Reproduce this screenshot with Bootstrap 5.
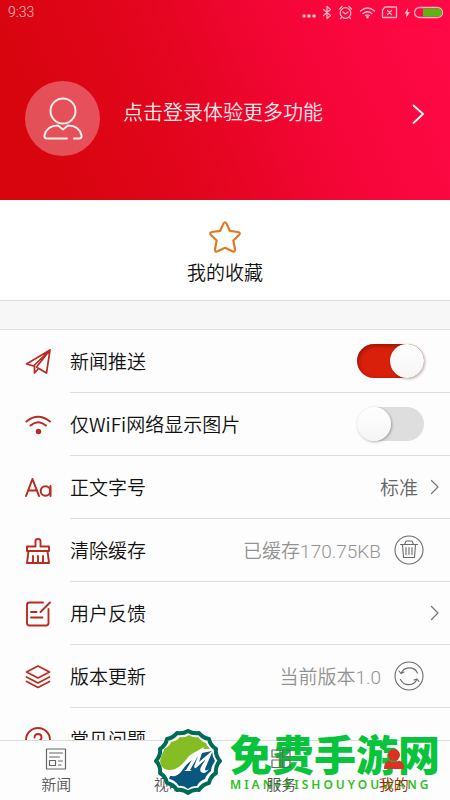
<!DOCTYPE html>
<html lang="zh-CN">
<head>
<meta charset="utf-8">
<meta name="viewport" content="width=device-width, initial-scale=1">
<title>我的</title>
<link href="https://cdn.jsdelivr.net/npm/bootstrap@5.3.0/dist/css/bootstrap.min.css" rel="stylesheet">
<style>
  body { font-family: "Noto Sans CJK SC", sans-serif; font-size: 19px; font-weight: 350; line-height: 28px; color: #111; background: #fdfdfd; }
  svg { display: block; flex: none; fill: none; stroke-linecap: round; stroke-linejoin: round; }
  a { color: inherit; text-decoration: none; }
  .hero { background: linear-gradient(68deg, #d8050f 12%, #e2051c 38%, #f6063a 70%, #ff0845 95%); color: #ffe9ec; padding-bottom: 44px; }
  .status-bar { font-family: Roboto, sans-serif; font-size: 14px; line-height: 25px; padding: 0 6px 0 8px; color: #ffc4cc; }
  .login-link { margin-top: 56px; padding: 0 26px 0 25px; font-size: 20px; }
  .avatar { width: 75px; height: 75px; background: rgba(255,255,255,.3); }
  .login-text { padding: 0 0 14px 23px; }
  .login-arrow { margin-bottom: 10px; }
  .fav { background: #fff; padding: 20px 0 11px; border-bottom: 1px solid #ddd; line-height: 35px; }
  .band { height: 29px; background: #f7f7f7; border-bottom: 1px solid #e0e0e0; }
  .setting { height: 63px; }
  .setting-icon { width: 70px; padding-left: 24px; color: #b92a20; }
  .setting-body { border-bottom: 1px solid #dcdcdc; padding-right: 26px; min-width: 0; }
  .setting-body.to-edge { padding-right: 11px; }
  .value { font-family: Roboto, "Noto Sans CJK SC", sans-serif; color: #939393; padding-top: 3px; }
  .value.strong-value { color: #666; }
  .toggle { appearance: none; width: 67px; height: 34px; margin: 0; border-radius: 17px; background: #dedede; position: relative; flex: none; }
  .toggle::before { content: ""; display: block; width: 34px; height: 34px; border-radius: 50%; background: linear-gradient(#fff, #f5f5f5); box-shadow: 1px 1px 3px rgba(0,0,0,.3); }
  .toggle:checked { background: #d9200a; box-shadow: inset 1px 2px 4px rgba(90,0,0,.5); }
  .toggle:checked::before { margin-left: auto; }
  .round-btn { border: 0; padding: 0; background: none; color: #6b6b6b; margin-left: 13px; }
  .tabs { background: #fdfdfd; border-top: 1px solid #ddd; height: 60px; font-size: 15px; line-height: 22px; color: #555; }
  .tab-link { padding-top: 7px; gap: 3px; }
  .tab-link svg { stroke: #666; }
  .tab-link.active { color: #b01c10; }
  .over { position: relative; z-index: 3; }
  .stamp { position: absolute; right: 10px; bottom: 5px; z-index: 2; gap: 8px; pointer-events: none; color: #08c43c; }
  .stamp-name { font-size: 42px; font-weight: 900; line-height: 46px; }
  .stamp-latin { font: 600 12px/18px "Noto Sans", sans-serif; letter-spacing: 3px; color: #2fc125; }
</style>
<script src="https://cdn.jsdelivr.net/npm/bootstrap@5.3.0/dist/js/bootstrap.bundle.min.js"></script>
</head>
<body>
<div class="vh-100 d-flex flex-column overflow-hidden position-relative">
  <header class="hero flex-shrink-0">
    <div class="status-bar d-flex justify-content-between align-items-center">
      <span>9:33</span>
      <svg width="143" height="20" viewBox="301 3 143 20" stroke="#ffb3c2" stroke-width="1.3" aria-hidden="true">
        <g fill="#ffc6d0" stroke="none"><circle cx="304" cy="16" r="1.8"/><circle cx="309" cy="16" r="1.8"/><circle cx="314" cy="16" r="1.8"/></g>
        <path d="M323.500 9.500l7 6-3.500 3V6.500l3.500 3-7 6"/>
        <circle cx="345.500" cy="13" r="5.300"/><path d="M343 12l2.500 2 2.500-2M339.500 9l2.500-2.500M351.500 9L349 6.500M341.500 17.500l-1 1M349.500 17.500l1 1"/>
        <path d="M360.500 11q7-6 14 0M363 13.500q4.500-3.500 9 0M365.500 15.500q2-1.300 4 0"/><circle cx="367.500" cy="17" r=".8" fill="#ffc6d0"/>
        <path d="M385 7h11.500V17.500H382.500V10ZM387.500 10.500l4 4M391.500 10.500l-4 4"/>
        <path d="M408 8l-3.500 5.500h2L406 18l4-6h-2.500Z" fill="#ffc6d0" stroke="none"/>
        <rect x="414.500" y="7.500" width="28" height="10" rx="5"/><path d="M423 8.500h15a4 4 0 0 1 0 8h-15Z" fill="#5cb414" stroke="none"/>
      </svg>
    </div>
    <a href="#" class="login-link d-flex align-items-center">
      <span class="avatar rounded-circle d-flex align-items-center justify-content-center">
        <svg width="40" height="44" viewBox="0 0 40 44" stroke="#fff0f0" stroke-width="2"><circle cx="20" cy="14" r="12.500"/><path d="M24 41.500H4Q1 41.500 1.500 38.500C3 32 8 28.500 15 28.500L20 32.500L25 28.500C32 28.500 37 32 38.500 38.500Q39 41.500 36 41.500H31"/></svg>
      </span>
      <span class="login-text flex-grow-1">点击登录体验更多功能</span>
      <svg class="login-arrow" width="12" height="20" viewBox="0 0 12 20" stroke="#fff" stroke-width="1.800"><path d="M1.500 1.500L11 10L1.500 19"/></svg>
    </a>
  </header>

  <a href="#" class="fav d-flex flex-column align-items-center flex-shrink-0">
    <svg width="34" height="34" viewBox="0 0 34 34" stroke="#e07a24" stroke-width="2.200"><path d="M15.500 3.500Q17 1 18.500 3.500L21.800 10.800L30 12Q33 12.800 31 15L25.300 20.500L27 29Q27.200 32.500 24.300 31.300L17 27.800L9.700 31.300Q6.800 32.500 7 29L8.700 20.500L3 15Q1 12.800 4 12L12.200 10.800Z"/></svg>
    <span>我的收藏</span>
  </a>
  <div class="band flex-shrink-0"></div>

  <main class="flex-grow-1 overflow-hidden">
    <ul class="list-unstyled mb-0">
      <li class="setting d-flex">
        <span class="setting-icon d-flex align-items-center"><svg width="28" height="28" viewBox="0 0 28 28" stroke="currentColor" stroke-width="1.700"><path d="M26 2L2.500 16L9.500 18L26 2L22.500 25L14 20M26 2L12.500 19M10.500 18V25L14 21"/></svg></span>
        <div class="setting-body flex-grow-1 d-flex align-items-center justify-content-between"><label for="push">新闻推送</label><input class="toggle" type="checkbox" role="switch" id="push" checked></div>
      </li>
      <li class="setting d-flex">
        <span class="setting-icon d-flex align-items-center"><svg width="28" height="28" viewBox="0 0 28 28" stroke="currentColor" stroke-width="2"><path d="M2.500 10.500Q14 1 26 10.500M6.500 14.500Q14 8 22 14.500"/><circle cx="14.500" cy="20.500" r="2.700" fill="currentColor" stroke="none"/></svg></span>
        <div class="setting-body flex-grow-1 d-flex align-items-center justify-content-between"><label for="wifi">仅WiFi网络显示图片</label><input class="toggle" type="checkbox" role="switch" id="wifi"></div>
      </li>
      <li class="setting d-flex">
        <span class="setting-icon d-flex align-items-center"><svg width="28" height="28" viewBox="0 0 28 28" stroke="currentColor" stroke-width="2"><path d="M2 22L8.500 5L15 22M4.500 16.500H12.500M26.500 12V22"/><circle cx="21.500" cy="17" r="4.800"/></svg></span>
        <a href="#" class="setting-body to-edge flex-grow-1 d-flex align-items-center justify-content-between"><span>正文字号</span><span class="d-flex align-items-center gap-2"><span class="value strong-value me-1">标准</span><svg width="9" height="16" viewBox="0 0 9 16" stroke="#777" stroke-width="1.200"><path d="M1.500 1.500L8 8L1.500 14.500"/></svg></span></a>
      </li>
      <li class="setting d-flex">
        <span class="setting-icon d-flex align-items-center"><svg width="28" height="28" viewBox="0 0 28 28" stroke="currentColor" stroke-width="1.900"><path d="M11.500 9.500V4Q11.500 2 14 2T16.500 4V9.500H25V14H3V9.500ZM4.500 14L3 26H25L23.500 14M9 19V25.500M14 19V25.500M19 19V25.500"/></svg></span>
        <div class="setting-body flex-grow-1 d-flex align-items-center justify-content-between"><span>清除缓存</span><span class="d-flex align-items-center"><span class="value">已缓存170.75KB</span><button type="button" class="round-btn" aria-label="清除缓存"><svg width="30" height="30" viewBox="0 0 30 30" stroke="currentColor" stroke-width="1.100"><circle cx="15" cy="15" r="14"/><path d="M6.500 9.500H23.500M10.500 9.500L12 6H18L19.500 9.500M8.500 9.500L9.500 22.500H20.500L21.500 9.500M12 12.500V19.500M15 12.500V19.500M18 12.500V19.500"/></svg></button></span></div>
      </li>
      <li class="setting d-flex">
        <span class="setting-icon d-flex align-items-center"><svg width="28" height="28" viewBox="0 0 28 28" stroke="currentColor" stroke-width="1.900"><path d="M19 2.500H5.500Q3 2.500 3 5V23Q3 25.500 5.500 25.500H22Q24.500 25.500 24.500 23V9M26 2.500L16.500 12M7 12H12.500M7 17.500H18.500"/></svg></span>
        <a href="#" class="setting-body to-edge flex-grow-1 d-flex align-items-center justify-content-between"><span>用户反馈</span><svg width="9" height="16" viewBox="0 0 9 16" stroke="#777" stroke-width="1.200"><path d="M1.500 1.500L8 8L1.500 14.500"/></svg></a>
      </li>
      <li class="setting d-flex">
        <span class="setting-icon d-flex align-items-center"><svg width="28" height="28" viewBox="0 0 28 28" stroke="currentColor" stroke-width="1.700"><path d="M14 3L25.500 9L14 15L2.500 9ZM2.500 14L14 20L25.500 14M2.500 18.500L14 24.500L25.500 18.500"/></svg></span>
        <div class="setting-body flex-grow-1 d-flex align-items-center justify-content-between"><span>版本更新</span><span class="d-flex align-items-center"><span class="value">当前版本1.0</span><button type="button" class="round-btn" aria-label="检查更新"><svg width="30" height="30" viewBox="0 0 30 30" stroke="currentColor" stroke-width="1.100"><circle cx="15" cy="15" r="14"/><path d="M7 12.500A9 9 0 0 1 23.500 12M23 18A9 9 0 0 1 6.500 18.500M5 10L7 12.500L10 11M20 19L23 18L25 20.500"/></svg></button></span></div>
      </li>
      <li class="setting d-flex">
        <span class="setting-icon d-flex align-items-center"><svg width="28" height="28" viewBox="0 0 28 28" stroke="currentColor" stroke-width="1.900"><circle cx="14" cy="14" r="12"/><path d="M10.500 11.500Q10.500 8 14 8T17.500 11.500Q17.500 14 14 15.500V17M14 20.500V20.600"/></svg></span>
        <a href="#" class="setting-body to-edge flex-grow-1 d-flex align-items-center"><span>常见问题</span></a>
      </li>
    </ul>
  </main>

  <nav class="tabs row g-0 flex-shrink-0">
    <a href="#" class="tab-link col d-flex flex-column align-items-center"><svg width="22" height="22" viewBox="0 0 22 22" stroke-width="1.200"><path d="M1.500 1H20.500V21H1.500ZM4.500 5H17.500M4.500 9H14.500M13.500 13H17.500M13.500 17H16M4.500 12.500H10.500V17.500H4.500Z"/></svg><span>新闻</span></a>
    <a href="#" class="tab-link col d-flex flex-column align-items-center"><svg width="22" height="22" viewBox="0 0 22 22" stroke-width="1.200"><circle cx="11" cy="11" r="9.500"/><path d="M8.500 6.500L15 11L8.500 15.500Z"/></svg><span>视听</span></a>
    <a href="#" class="tab-link col d-flex flex-column align-items-center"><svg class="over" width="22" height="22" viewBox="0 0 22 22" stroke-width="1.200"><path d="M2 2H10V9H2ZM2 12H10V19.500H2ZM12.500 12H20V19.500H12.500ZM12.500 2H20V9H12.500Z"/></svg><span class="over">服务</span></a>
    <a href="#" class="tab-link active col d-flex flex-column align-items-center" aria-current="page"><svg class="over" width="22" height="22" viewBox="0 0 22 22"><g fill="#dd3025" stroke="none"><circle cx="11" cy="7" r="6"/><path d="M1 21Q1 13.500 6 12.500Q11 16 16 12.500Q21 13.500 21 21Z"/></g></svg><span class="over">我的</span></a>
  </nav>

  <div class="stamp d-flex align-items-center">
    <svg width="68" height="66" viewBox="0 0 68 66" aria-hidden="true">
      <path d="M34 2Q39 5 45 4Q49 9 55 10Q56 16 62 20Q61 26 66 32Q61 37 62 44Q56 48 55 54Q49 55 45 61Q39 60 34 64Q29 60 23 61Q19 55 13 54Q12 48 6 44Q7 37 2 32Q7 26 6 20Q12 16 13 10Q19 9 23 4Q29 5 34 2Z" fill="#fff" stroke="#006b57" stroke-width="4"/>
      <path d="M7 36C4 30 10 24 10 20Q16 17 17 13Q23 12 26 8Q31 9 35 6Q39 9 44 8Q48 13 52 14Q53 17 56 20L49 20C40 23 35 26 32 31C27 37 22 41 16 41Q9 41 7 36Z" fill="#86bd25"/>
      <path d="M16 47C25 45 29 37 35 33L48 24L58 22Q58 27 61 32Q57 38 57 42Q52 46 51 50Q45 52 43 57Q37 57 34 60Q29 56 25 57Q21 51 15 50Z" fill="#07577e"/>
      <path d="M8 40C20 44 27 40 32 33C36 27 41 23 50 18L45 33L59 21L51 40Q51 43 55 40Q51 46 47 43Q45 41 48 36L52 30L42 39Q39 40 41 35L44 27L36 41L38 42H30L32 41L38 31C32 35 30 39 27 43C22 49 14 49 8 40Z" fill="#fff"/>
    </svg>
    <div class="d-flex flex-column">
      <span class="stamp-name">免费手游网</span>
      <span class="stamp-latin">MIANFEISHOUYOUWANG</span>
    </div>
  </div>
</div>
</body>
</html>
